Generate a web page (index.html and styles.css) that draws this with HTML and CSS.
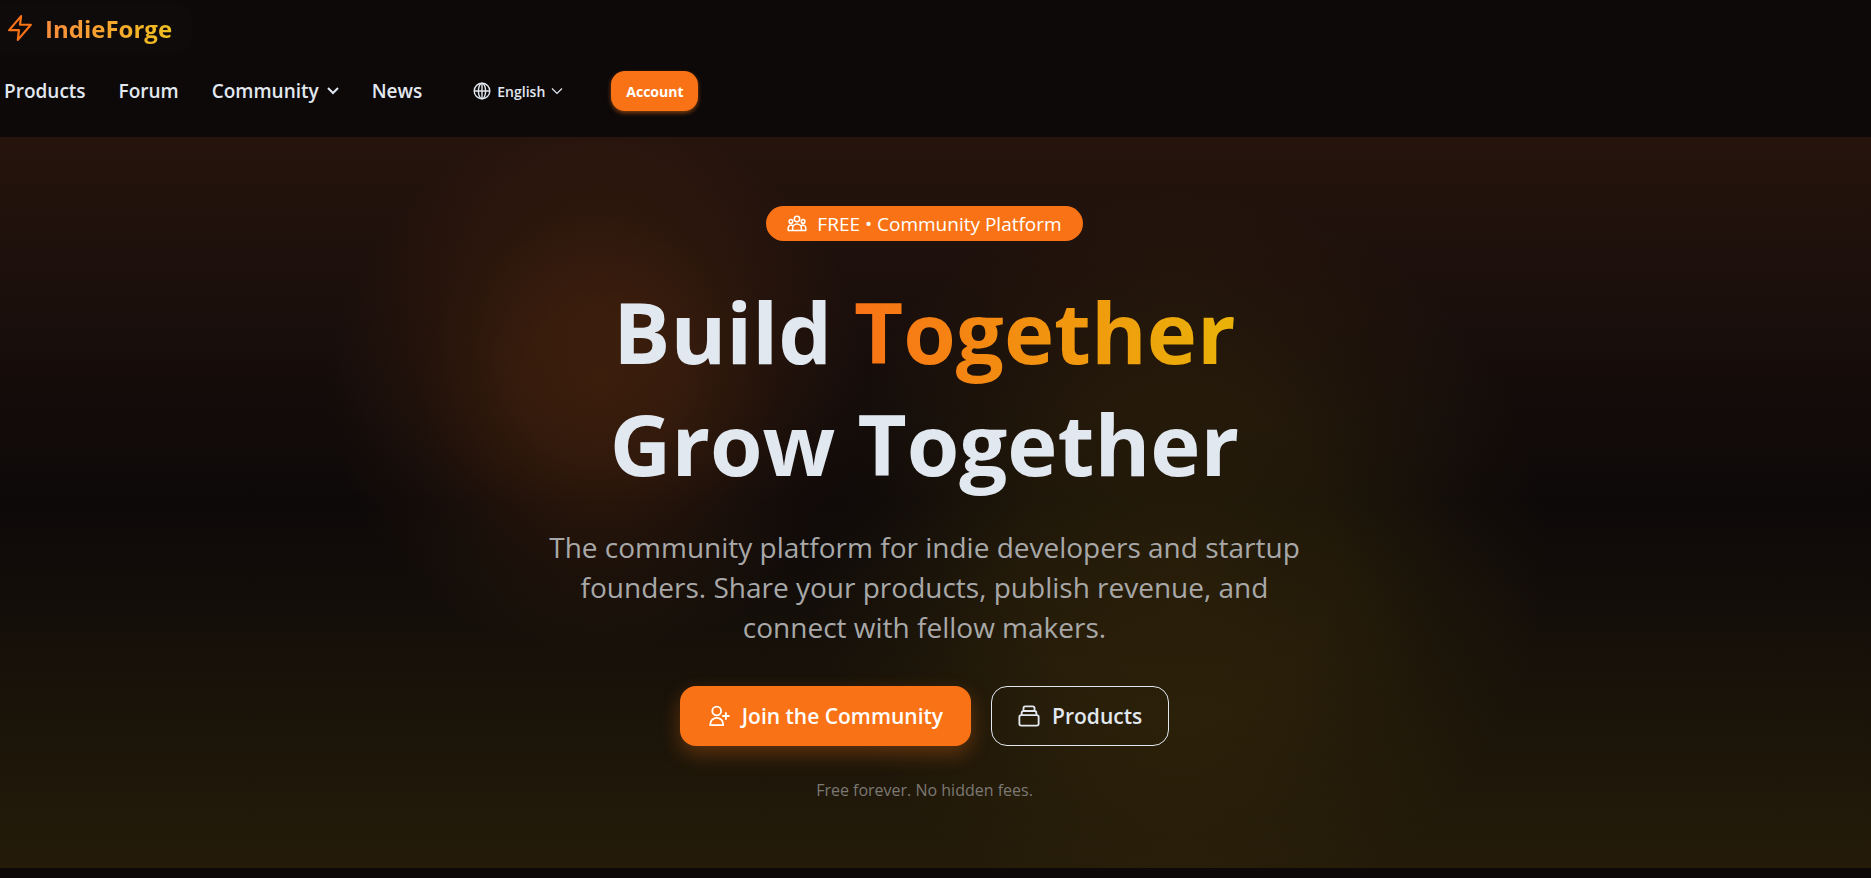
FILE: index.html
```html
<!DOCTYPE html>
<html lang="en">
<head>
<meta charset="UTF-8" />
<meta name="viewport" content="width=device-width, initial-scale=1.0" />
<title>IndieForge</title>
<link rel="stylesheet" href="styles.css">
</head>
<body>

<header class="site-header">
  <a class="brand" href="#">
    <svg class="brand-icon" viewBox="0 0 24 24" fill="none" stroke="currentColor" stroke-width="2" stroke-linecap="round" stroke-linejoin="round" aria-hidden="true"><path d="M13 1 2 14h9l-1 9 12-14h-10z"/></svg>
    <span class="brand-name">IndieForge</span>
  </a>

  <nav class="nav">
    <a class="nav-link" href="#">Products</a>
    <a class="nav-link" href="#">Forum</a>
    <button class="nav-link" type="button">Community
      <svg class="nav-arrow" viewBox="0 0 12 12" fill="none" stroke="currentColor" stroke-width="2" aria-hidden="true"><path d="m1 3 5 5 5-5"/></svg>
    </button>
    <a class="nav-link" href="#">News</a>
    <button class="language" type="button">
      <svg class="globe" viewBox="0 0 18 18" fill="none" stroke="currentColor" stroke-width="1.4" aria-hidden="true"><circle cx="9" cy="9" r="7.8"/><ellipse cx="9" cy="9" rx="3.6" ry="7.8"/><path d="M1.2 9h15.6M9 1.2v15.6"/></svg>
      English
      <svg class="language-arrow" viewBox="0 0 12 12" fill="none" stroke="currentColor" stroke-width="1.2" aria-hidden="true"><path d="m1 3.5 5 5 5-5"/></svg>
    </button>
    <button class="account" type="button">Account</button>
  </nav>
</header>

<main class="hero">
  <div class="badge">
    <svg class="badge-icon" viewBox="0 0 20 18" fill="none" stroke="currentColor" stroke-width="1.5" stroke-linejoin="round" aria-hidden="true"><circle cx="10" cy="4" r="2.7"/><circle cx="3.9" cy="6.4" r="1.8"/><circle cx="16.1" cy="6.4" r="1.8"/><path d="M5.6 15.5v-2a4.4 4.4 0 0 1 8.8 0v2zM5.6 15.5H1.2V13a2.8 2.8 0 0 1 4.8-2M14.4 15.5h4.4V13a2.8 2.8 0 0 0-4.8-2"/></svg>
    <span>FREE • Community Platform</span>
  </div>

  <h1 class="title">Build <span class="highlight">Together</span><br>Grow Together</h1>

  <p class="subtitle">The community platform for indie developers and startup founders. Share your products, publish revenue, and connect with fellow makers.</p>

  <div class="actions">
    <a class="btn btn-primary" href="#">
      <svg class="btn-icon" viewBox="0 0 24 24" fill="none" stroke="currentColor" stroke-width="2" stroke-linejoin="round" aria-hidden="true"><circle cx="9.5" cy="6.5" r="4.8"/><path d="M2.5 22v-1a7 7 0 0 1 14 0v1zM19.5 8v8M15.5 12h8"/></svg>
      Join the Community
    </a>
    <a class="btn btn-outline" href="#">
      <svg class="btn-icon" viewBox="0 0 24 24" fill="none" stroke="currentColor" stroke-width="2" stroke-linejoin="round" aria-hidden="true"><rect x="1.500" y="11" width="21" height="11.5" rx="2"/><path d="M4 11V8.500a2 2 0 0 1 2-2h12a2 2 0 0 1 2 2V11M6 6.500V3.500a2 2 0 0 1 2-2h8a2 2 0 0 1 2 2v3"/></svg>
      Products
    </a>
  </div>

  <p class="note">Free forever. No hidden fees.</p>
</main>

</body>
</html>
```
FILE: styles.css
```css
* {
  box-sizing: border-box;
}

body {
  margin: 0;
  min-height: 100vh;
  background: #0d0909;
  color: #e2e8f0;
  font-family: 'Segoe UI', 'Open Sans', 'Noto Sans', sans-serif;
}

a {
  color: inherit;
  text-decoration: none;
}

button {
  border: none;
  background: none;
  color: inherit;
  font-family: inherit;
  cursor: pointer;
}

h1, p {
  margin: 0;
}

.site-header {
  display: flex;
  flex-direction: column;
  align-items: flex-start;
  gap: 18px;
  padding: 3px 0 26px;
}

.brand {
  display: flex;
  align-items: center;
  gap: 12px;
  height: 50px;
  padding: 0 20px 0 7px;
  border-radius: 0 16px 16px 0;
  background: #100b0b;
}

.brand-icon {
  width: 26px;
  height: 26px;
  color: #f97316;
}

.brand-name {
  font-size: 24px;
  font-weight: 700;
  background: linear-gradient(90deg, #fb8c3c, #f0c020);
  -webkit-background-clip: text;
  background-clip: text;
  color: transparent;
}

.nav {
  display: flex;
  align-items: center;
  padding-left: 4px;
}

.nav-link {
  display: flex;
  align-items: center;
  gap: 8px;
  margin-right: 33px;
  padding: 0;
  font-size: 19px;
  font-weight: 600;
}

.nav-arrow {
  width: 12px;
  height: 12px;
}

.language {
  display: flex;
  align-items: center;
  gap: 6px;
  margin: 0 48px 0 18px;
  padding: 0;
  font-size: 14px;
  font-weight: 600;
}

.globe {
  width: 18px;
  height: 18px;
}

.language-arrow {
  width: 12px;
  height: 12px;
}

.account {
  height: 40px;
  padding: 0 15px;
  border-radius: 14px;
  background: #f97316;
  color: #fff;
  font-size: 14px;
  font-weight: 700;
  box-shadow: 0 2px 4px rgba(249, 115, 22, 0.5);
}

.hero {
  display: flex;
  flex-direction: column;
  align-items: center;
  padding: 69px 22px 65px 0;
  text-align: center;
  background:
    radial-gradient(circle at 32% 250px, rgba(249, 115, 22, 0.17), rgba(249, 115, 22, 0.14) 80px, rgba(249, 115, 22, 0.05) 180px, transparent 270px),
    radial-gradient(circle at 63% 420px, rgba(234, 179, 8, 0.1), rgba(234, 179, 8, 0.08) 160px, rgba(234, 179, 8, 0.03) 270px, transparent 370px),
    linear-gradient(180deg, #26140d, #0d0909 50%, #241b09);
}

.badge {
  display: flex;
  align-items: center;
  gap: 10px;
  height: 35px;
  padding: 0 21px;
  border-radius: 18px;
  background: #f97316;
  color: #fff;
  font-size: 19px;
}

.badge-icon {
  width: 20px;
  height: 18px;
}

.title {
  margin-top: 34px;
  font-size: 85px;
  font-weight: 700;
  line-height: 112px;
}

.highlight {
  background: linear-gradient(90deg, #f97316, #eab308);
  -webkit-background-clip: text;
  background-clip: text;
  color: transparent;
}

.subtitle {
  max-width: 780px;
  margin-top: 28px;
  color: #a8a8a8;
  font-size: 28px;
  line-height: 40px;
}

.actions {
  display: flex;
  gap: 20px;
  margin-top: 39px;
}

.btn {
  display: flex;
  align-items: center;
  gap: 12px;
  height: 60px;
  padding: 0 26px;
  border-radius: 16px;
  font-size: 21px;
  font-weight: 600;
}

.btn-icon {
  width: 22px;
  height: 22px;
}

.btn-primary {
  padding: 0 28px;
  background: #f97316;
  color: #fff;
  box-shadow: 0 8px 20px rgba(249, 115, 22, 0.3);
}

.btn-outline {
  border: 1px solid #e2e8f0;
}

.note {
  margin-top: 31px;
  color: #7c7974;
  font-size: 16px;
  line-height: 26px;
}
```
